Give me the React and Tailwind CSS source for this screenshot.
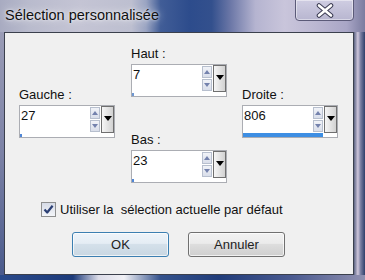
import React from "react";

function Tri({ up, color, w = 5, h = 3 }) {
  return (
    <svg width={w} height={h} viewBox={`0 0 ${w} ${h}`}>
      <path d={up ? `M0 ${h}L${w / 2} 0L${w} ${h}Z` : `M0 0L${w / 2} ${h}L${w} 0Z`} fill={color} />
    </svg>
  );
}

function SpinBox({ value, barClass }) {
  return (
    <div className="w-[96px] h-[33px] border border-[#abadb3] bg-white flex flex-col">
      <div className="flex h-[27px]">
        <div className="flex-1 pl-[1px] pt-[2px] text-[13px] leading-[15px] text-[#111]">{value}</div>
        <div className="w-[10px] flex flex-col gap-[1px] pt-[1px] mr-[1px]">
          <div className="h-[12px] border border-[#b7bfce] bg-[linear-gradient(#f1f3f8,#d9deea)] flex items-center justify-center">
            <Tri up color="#7482ad" w={6} h={4} />
          </div>
          <div className="h-[12px] border border-[#b7bfce] bg-[linear-gradient(#f1f3f8,#d9deea)] flex items-center justify-center">
            <Tri color="#7482ad" w={6} h={4} />
          </div>
        </div>
        <div className="w-[13px] h-[27px] border border-[#6f6f6f] bg-[linear-gradient(90deg,#f6f6f6,#d2d2d2)] flex items-center justify-center pb-[3px]">
          <Tri color="#000" w={8} h={5} />
        </div>
      </div>
      <div className="h-[4px] flex items-end">
        <div className={barClass} />
      </div>
    </div>
  );
}

function Label({ children }) {
  return <div className="text-[13px] leading-[15px] text-[#111] mb-[3px]">{children}</div>;
}

export default function App() {
  return (
    <div
      className="w-[365px] h-[280px] overflow-hidden flex flex-col relative"
      style={{ fontFamily: '"Liberation Sans", Arial, sans-serif' }}
    >
      {/* Title bar */}
      <div className="h-[32px] shrink-0 bg-[linear-gradient(90deg,#a8abc1_0%,#b9bbcd_8%,#c4c4d4_22%,#bdbfd0_36%,#9aa4c2_40%,#415d97_44%,#2d4c8c_52%,#33508d_58%,#6a76a6_63%,#b5b4d0_70%,#c9c5db_78%,#bcb8d2_86%,#a9a6c6_95%,#7b7ca0_100%)]">
        <div className="pl-[5px] pt-[7px] text-[14.5px] leading-[17px] text-[#111] [text-shadow:0_0_8px_rgba(255,255,255,0.9),0_0_3px_rgba(255,255,255,0.8)]">
          Sélection personnalisée
        </div>
      </div>

      {/* Close button */}
      <div className="absolute top-[-1px] right-[11px] w-[59px] h-[22px] rounded-b-[4px] border border-[#5b5a78] bg-[linear-gradient(#cfcde2,#b8b6d0)] shadow-[inset_0_0_0_1px_rgba(255,255,255,0.45)] flex items-center justify-center">
        <svg width="18" height="15" viewBox="0 0 18 15">
          <path d="M3 2.5L15 12.5M15 2.5L3 12.5" stroke="#3b3b52" strokeWidth="4.6" strokeLinecap="round" />
          <path d="M3 2.5L15 12.5M15 2.5L3 12.5" stroke="#ffffff" strokeWidth="2.6" strokeLinecap="round" />
        </svg>
      </div>

      {/* Middle */}
      <div className="flex h-[243px] shrink-0">
        <div className="w-[4px] bg-[linear-gradient(#9a9cb6,#7c82a6_50%,#4a5a8c)]" />
        <div className="w-[350px] border border-[#3b404d] bg-[#f0f0f0] flex flex-col">
          <div className="flex pl-[14px]">
            <div className="w-[96px] pt-[54px]">
              <Label>Gauche :</Label>
              <SpinBox value="27" barClass="w-[2px] h-[3px] bg-[#4f86d6]" />
            </div>
            <div className="w-[96px] ml-[16px] pt-[13px]">
              <Label>Haut :</Label>
              <SpinBox value="7" barClass="w-[2px] h-[3px] bg-[#6f98d2]" />
              <div className="mt-[35px]">
                <Label>Bas :</Label>
                <SpinBox value="23" barClass="w-[2px] h-[3px] bg-[#4f86d6]" />
              </div>
            </div>
            <div className="w-[96px] ml-[15px] pt-[54px]">
              <Label>Droite :</Label>
              <SpinBox value="806" barClass="w-[80px] h-[4px] bg-[#3d8ee3]" />
            </div>
          </div>

          <div className="flex items-center ml-[36px] mt-[18px] h-[16px]">
            <div className="w-[15px] h-[15px] border border-[#8e8f8f] bg-[linear-gradient(#d6dbe6,#f4f6fa)] flex items-center justify-center">
              <svg width="11" height="11" viewBox="0 0 11 11">
                <path d="M1.5 5.5L4.2 8.5L9.6 1.8" stroke="#2b3f74" strokeWidth="2.2" fill="none" strokeLinejoin="round" />
              </svg>
            </div>
            <div className="ml-[4px] text-[13px] leading-[15px] text-[#111] whitespace-pre">
              Utiliser la  sélection actuelle par défaut
            </div>
          </div>

          <div className="flex ml-[67px] mt-[15px] gap-[19px]">
            <div className="w-[97px] h-[25px] rounded-[3px] border border-[#3c7fb1] bg-[linear-gradient(#eef4f9_0%,#e5edf4_45%,#d4e0ea_50%,#c9d7e2_100%)] shadow-[inset_0_0_0_1px_rgba(255,255,255,0.7)] flex items-center justify-center text-[13px] leading-[15px] text-[#222]">
              OK
            </div>
            <div className="w-[97px] h-[25px] rounded-[3px] border border-[#707070] bg-[linear-gradient(#f2f2f2_0%,#ebebeb_45%,#dddddd_50%,#cfcfcf_100%)] shadow-[inset_0_0_0_1px_rgba(255,255,255,0.7)] flex items-center justify-center text-[13px] leading-[15px] text-[#222]">
              Annuler
            </div>
          </div>
        </div>
        <div className="flex-1 bg-[linear-gradient(90deg,#5d6584_0%,#cfc7dc_35%,#7a7fa2_60%,#2f3f6a_100%)]" />
      </div>

      {/* Bottom */}
      <div className="flex-1 bg-[linear-gradient(90deg,#2a4a8a_0%,#1c3a7a_20%,#dcdce8_27%,#f0f0f5_34%,#34528c_44%,#203c7a_60%,#4a5a90_80%,#9090b0_100%)]" />
    </div>
  );
}
